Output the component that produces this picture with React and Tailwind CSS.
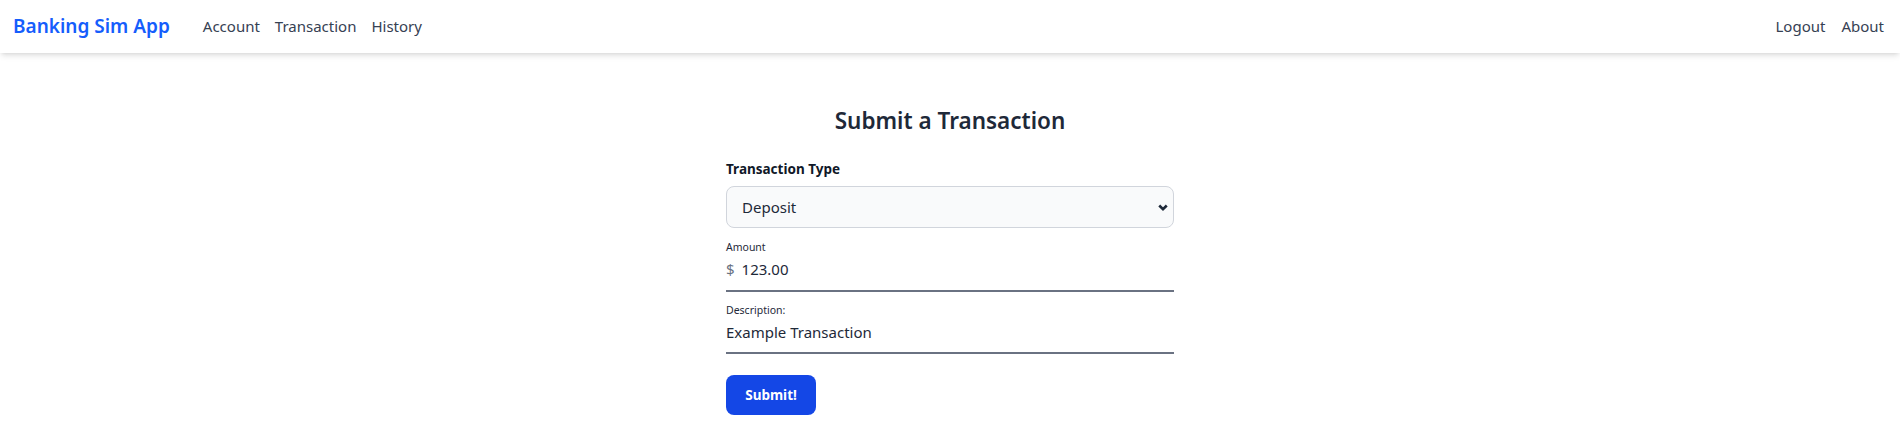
export default function App() {
  return (
    <div className="min-h-screen bg-white font-['Segoe_UI','Noto_Sans',sans-serif] text-gray-900">
      <nav className="flex h-[53px] items-center justify-between bg-white px-[13px] shadow-md">
        <div className="flex items-center">
          <a className="text-[19px] font-semibold text-blue-600" href="#">
            Banking Sim App
          </a>
          <div className="ml-[33px] flex gap-[15px] text-[15px] text-gray-700">
            <a href="#">Account</a>
            <a href="#">Transaction</a>
            <a href="#">History</a>
          </div>
        </div>
        <div className="flex gap-[16px] pr-[3px] text-[15px] text-gray-700">
          <a href="#">Logout</a>
          <a href="#">About</a>
        </div>
      </nav>

      <main className="mx-auto mt-[52px] w-[448px]">
        <h1 className="text-center text-[22.5px] leading-[32px] font-semibold text-gray-800">Submit a Transaction</h1>

        <form className="mt-[22px]">
          <label className="block text-[13.5px] leading-[20px] font-bold text-gray-900">Transaction Type</label>
          <div className="relative mt-[7px]">
            <select className="h-[42px] w-full appearance-none rounded-lg border border-gray-300 bg-gray-50 px-[15px] text-[15px] text-gray-800">
              <option>Deposit</option>
              <option>Withdrawal</option>
            </select>
            <svg
              className="pointer-events-none absolute right-[5px] top-1/2 h-3 w-3 -translate-y-1/2 text-gray-800"
              fill="none"
              stroke="currentColor"
              strokeWidth="3.5"
              viewBox="0 0 16 16"
            >
              <path d="M3 6l5 5 5-5" />
            </svg>
          </div>

          <div className="mt-[11px] border-b-2 border-gray-500 pb-[9px]">
            <label className="block text-[10.5px] leading-[16px] text-gray-800">Amount</label>
            <div className="mt-[2px] flex items-center text-[15px] leading-[24px]">
              <span className="text-gray-500">$</span>
              <span className="ml-[7px] text-gray-800">123.00</span>
            </div>
          </div>

          <div className="mt-[10px] border-b-2 border-gray-500 pb-[8px]">
            <label className="block text-[10.5px] leading-[16px] text-gray-800">Description:</label>
            <div className="mt-[2px] text-[15px] leading-[24px] text-gray-800">Example Transaction</div>
          </div>

          <button
            className="mt-[21px] h-[40px] w-[90px] rounded-lg bg-blue-700 text-[13.5px] font-bold text-white"
            type="button"
          >
            Submit!
          </button>
        </form>
      </main>
    </div>
  );
}
